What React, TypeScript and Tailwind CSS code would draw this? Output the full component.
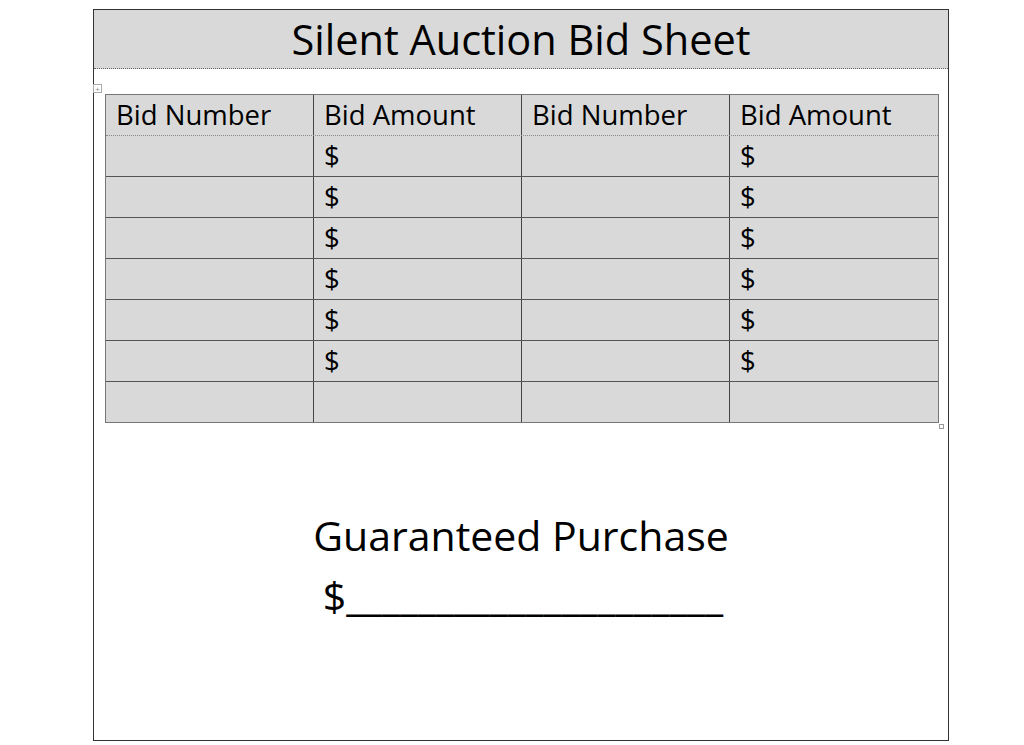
const rows = [true, true, true, true, true, true, false];

const font = { fontFamily: '"Open Sans", "Liberation Sans", sans-serif' };

const Cell = ({ text, last }: { text?: string; last?: boolean }) => (
  <div
    className={`h-[40px] pl-[10px] flex items-center text-[27.5px] leading-none text-black ${
      last ? "" : "border-r border-[#444]"
    }`}
  >
    {text}
  </div>
);

export default function App() {
  return (
    <div className="w-full h-[745px] bg-white" style={font}>
      <div className="ml-[93px] pt-[9px]">
        <div className="w-[856px] h-[732px] border border-[#333] flex flex-col">
          {/* title band */}
          <div className="h-[59px] bg-[#d9d9d9] border-b border-dotted border-[#666] flex items-center justify-center">
            <span className="text-[41.5px] leading-none text-black pt-[2px]">Silent Auction Bid Sheet</span>
          </div>

          {/* bid table */}
          <div className="relative pt-[25px] pl-[11px]">
            <div className="absolute left-[-1px] top-[15px] w-[9px] h-[9px] border border-[#aaa] bg-white flex items-center justify-center text-[8px] leading-none text-[#888]">
              +
            </div>
            <div className="w-[834px] border border-[#777] bg-[#d9d9d9]">
              <div className="grid grid-cols-4 border-b border-dotted border-[#888]">
                <Cell text="Bid Number" />
                <Cell text="Bid Amount" />
                <Cell text="Bid Number" />
                <Cell text="Bid Amount" last />
              </div>
              {rows.map((hasDollar, i) => (
                <div
                  key={i}
                  className={`grid grid-cols-4 ${i < rows.length - 1 ? "border-b border-[#555]" : ""}`}
                >
                  <Cell />
                  <Cell text={hasDollar ? "$" : ""} />
                  <Cell />
                  <Cell text={hasDollar ? "$" : ""} last />
                </div>
              ))}
            </div>
            <div className="absolute left-[845px] bottom-[-6px] w-[5px] h-[5px] border border-[#999] bg-white" />
          </div>

          {/* guaranteed purchase */}
          <div className="mt-[86px] flex flex-col items-center text-black">
            <div className="text-[41px] leading-[52px]">Guaranteed Purchase</div>
            <div className="mt-[8px] text-[41px] leading-[52px] pl-[4px]">$_____________________</div>
          </div>
        </div>
      </div>
    </div>
  );
}
